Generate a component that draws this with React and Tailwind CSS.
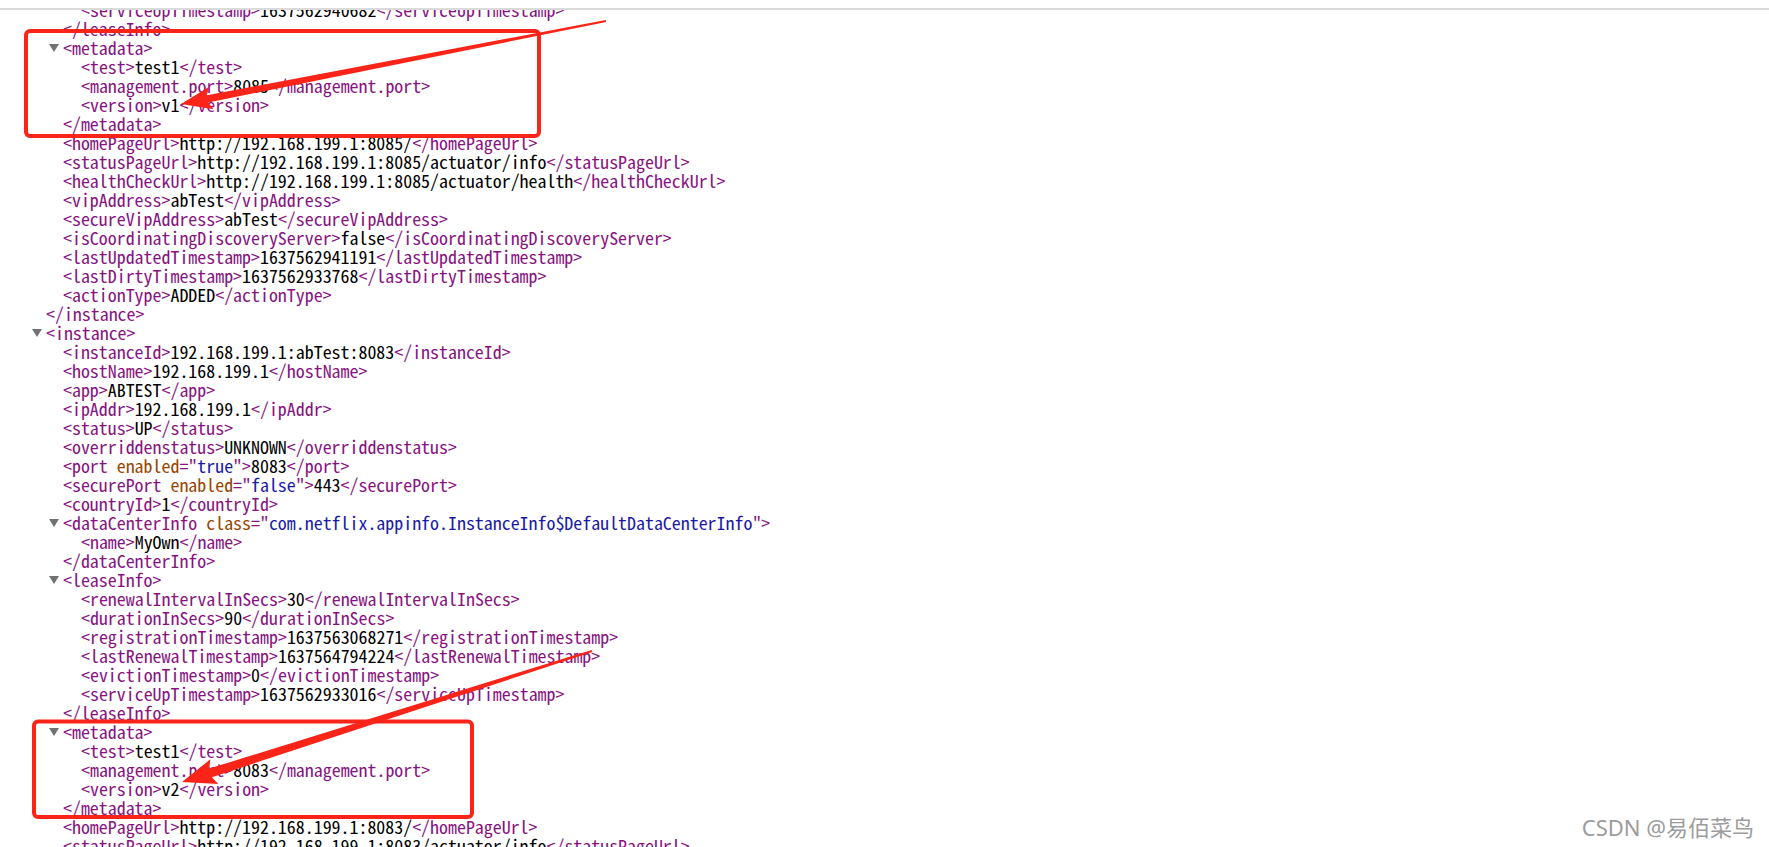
const lines = [
  { i: 3, t: 'serviceUpTimestamp', v: '1637562940682' },
  { i: 2, close: 'leaseInfo' },
  { i: 2, open: 'metadata' },
  { i: 3, t: 'test', v: 'test1' },
  { i: 3, t: 'management.port', v: '8085' },
  { i: 3, t: 'version', v: 'v1' },
  { i: 2, close: 'metadata' },
  { i: 2, t: 'homePageUrl', v: 'http://192.168.199.1:8085/' },
  { i: 2, t: 'statusPageUrl', v: 'http://192.168.199.1:8085/actuator/info' },
  { i: 2, t: 'healthCheckUrl', v: 'http://192.168.199.1:8085/actuator/health' },
  { i: 2, t: 'vipAddress', v: 'abTest' },
  { i: 2, t: 'secureVipAddress', v: 'abTest' },
  { i: 2, t: 'isCoordinatingDiscoveryServer', v: 'false' },
  { i: 2, t: 'lastUpdatedTimestamp', v: '1637562941191' },
  { i: 2, t: 'lastDirtyTimestamp', v: '1637562933768' },
  { i: 2, t: 'actionType', v: 'ADDED' },
  { i: 1, close: 'instance' },
  { i: 1, open: 'instance' },
  { i: 2, t: 'instanceId', v: '192.168.199.1:abTest:8083' },
  { i: 2, t: 'hostName', v: '192.168.199.1' },
  { i: 2, t: 'app', v: 'ABTEST' },
  { i: 2, t: 'ipAddr', v: '192.168.199.1' },
  { i: 2, t: 'status', v: 'UP' },
  { i: 2, t: 'overriddenstatus', v: 'UNKNOWN' },
  { i: 2, t: 'port', a: ['enabled', 'true'], v: '8083' },
  { i: 2, t: 'securePort', a: ['enabled', 'false'], v: '443' },
  { i: 2, t: 'countryId', v: '1' },
  { i: 2, open: 'dataCenterInfo', a: ['class', 'com.netflix.appinfo.InstanceInfo$DefaultDataCenterInfo'] },
  { i: 3, t: 'name', v: 'MyOwn' },
  { i: 2, close: 'dataCenterInfo' },
  { i: 2, open: 'leaseInfo' },
  { i: 3, t: 'renewalIntervalInSecs', v: '30' },
  { i: 3, t: 'durationInSecs', v: '90' },
  { i: 3, t: 'registrationTimestamp', v: '1637563068271' },
  { i: 3, t: 'lastRenewalTimestamp', v: '1637564794224' },
  { i: 3, t: 'evictionTimestamp', v: '0' },
  { i: 3, t: 'serviceUpTimestamp', v: '1637562933016' },
  { i: 2, close: 'leaseInfo' },
  { i: 2, open: 'metadata' },
  { i: 3, t: 'test', v: 'test1' },
  { i: 3, t: 'management.port', v: '8083' },
  { i: 3, t: 'version', v: 'v2' },
  { i: 2, close: 'metadata' },
  { i: 2, t: 'homePageUrl', v: 'http://192.168.199.1:8083/' },
  { i: 2, t: 'statusPageUrl', v: 'http://192.168.199.1:8083/actuator/info' },
];

const indentClass = { 1: 'pl-[46px]', 2: 'pl-[63px]', 3: 'pl-[81px]' };
const foldClass = { 1: 'left-[32px]', 2: 'left-[49px]' };

const Attr = ({ a }) => (
  <>
    {' '}
    <span className="text-[#994500]">{a[0]}</span>="<span className="text-[#1a1aa6]">{a[1]}</span>"
  </>
);

const Line = ({ line }) => {
  const { i, t, v, a, open, close } = line;
  return (
    <div className={`relative h-[19px] leading-[19px] whitespace-pre ${indentClass[i]}`}>
      {open && (
        <svg className={`absolute top-[6px] ${foldClass[i]}`} width="10" height="8" viewBox="0 0 10 8">
          <path d="M0 0H10L5 8Z" fill="#727272" />
        </svg>
      )}
      {open && (
        <span className="text-[#881280]">
          &lt;{open}
          {a && <Attr a={a} />}&gt;
        </span>
      )}
      {close && <span className="text-[#881280]">&lt;/{close}&gt;</span>}
      {t && (
        <>
          <span className="text-[#881280]">
            &lt;{t}
            {a && <Attr a={a} />}&gt;
          </span>
          <span className="text-black">{v}</span>
          <span className="text-[#881280]">&lt;/{t}&gt;</span>
        </>
      )}
    </div>
  );
};

// tapered annotation arrow: thin tail, fat neck, triangular head
function arrowPoints(tip, tail, { head, headW, neck, end }) {
  const [tx, ty] = tip;
  const [sx, sy] = tail;
  const len = Math.hypot(sx - tx, sy - ty);
  const ux = (sx - tx) / len;
  const uy = (sy - ty) / len;
  const nx = -uy;
  const ny = ux;
  const bx = tx + ux * head;
  const by = ty + uy * head;
  return [
    [tx, ty],
    [bx + nx * headW + ux * 4, by + ny * headW + uy * 4],
    [bx + nx * neck, by + ny * neck],
    [sx + nx * end, sy + ny * end],
    [sx - nx * end, sy - ny * end],
    [bx - nx * neck, by - ny * neck],
    [bx - nx * headW + ux * 4, by - ny * headW + uy * 4],
  ]
    .map((p) => p.map((n) => n.toFixed(1)).join(','))
    .join(' ');
}

const Annotations = () => (
  <svg className="absolute inset-0 pointer-events-none" width="1769" height="847" viewBox="0 0 1769 847">
    <rect x="26" y="31" width="513" height="105" rx="4" fill="none" stroke="#fb2418" strokeWidth="4" />
    <rect x="34" y="721.5" width="438" height="95.5" rx="4" fill="none" stroke="#fb2418" strokeWidth="4" />
    <polygon
      fill="#fb2418"
      points={arrowPoints([181, 104], [606, 21], { head: 27, headW: 11.5, neck: 3.6, end: 1 })}
    />
    <polygon
      fill="#fb2418"
      points={arrowPoints([182, 782], [592, 651], { head: 30, headW: 13, neck: 4.5, end: 1.2 })}
    />
  </svg>
);

export default function App() {
  return (
    <div className="relative h-[847px] w-[1769px] overflow-hidden bg-white">
      <div className="h-[10px] border-b-2 border-[#dadada] bg-white" />
      <div className="h-[837px] overflow-hidden">
        <div className="-mt-[10px] font-[family-name:'Noto_Sans_Mono_CJK_SC','Liberation_Mono',monospace] text-[17.92px]">
          {lines.map((line, k) => (
            <Line key={k} line={line} />
          ))}
        </div>
      </div>
      <Annotations />
      <div className="absolute bottom-[8px] right-[15px] font-['Noto_Sans','Noto_Sans_CJK_SC',sans-serif] text-[22px] leading-[24px] text-[#9c9c9c]">
        CSDN @易佰菜鸟
      </div>
    </div>
  );
}
